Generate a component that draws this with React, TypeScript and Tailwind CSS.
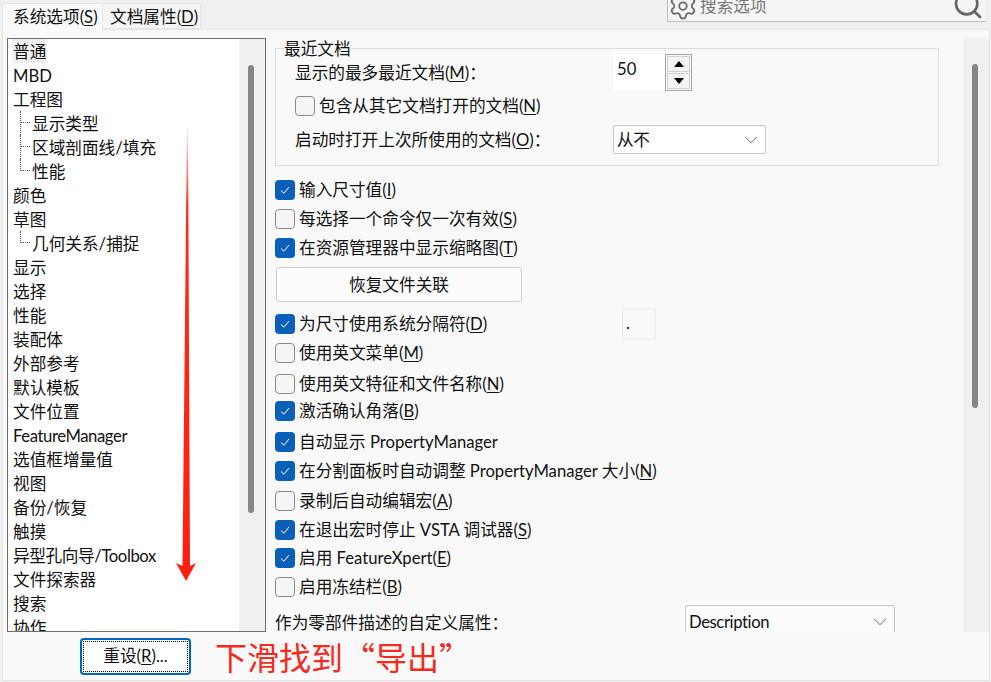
import { ChevronDown, Search, Settings } from 'lucide-react'

const sans = { fontFamily: '"Lato", "Noto Sans CJK SC", sans-serif' }
const cjkOnly = { fontFamily: '"Noto Sans CJK SC", sans-serif' }

const treeItems: [string, number][] = [
  ['普通', 0], ['MBD', 0], ['工程图', 0], ['显示类型', 1], ['区域剖面线/填充', 1], ['性能', 2],
  ['颜色', 0], ['草图', 0], ['几何关系/捕捉', 2], ['显示', 0], ['选择', 0], ['性能', 0],
  ['装配体', 0], ['外部参考', 0], ['默认模板', 0], ['文件位置', 0], ['FeatureManager', 0],
  ['选值框增量值', 0], ['视图', 0], ['备份/恢复', 0], ['触摸', 0], ['异型孔向导/Toolbox', 0],
  ['文件探索器', 0], ['搜索', 0], ['协作', 0],
]

// Mnemonic label: 输入尺寸值(I) with the letter underlined
const Label = ({ text, k, rest }: { text: string; k?: string; rest?: string }) => (
  <span className="whitespace-nowrap">
    {text}
    {k && (
      <span>
        (<span className="underline underline-offset-2">{k}</span>){rest}
      </span>
    )}
  </span>
)

const Check = ({ on }: { on?: boolean }) =>
  on ? (
    <span className="flex h-[20px] w-[20px] shrink-0 items-center justify-center rounded-[4px] bg-[#0a5fb9]">
      <svg width="12" height="12" viewBox="0 0 12 12" fill="none" stroke="white" strokeWidth="1">
        <path d="M2 6.5 L5 9.2 L10 3" />
      </svg>
    </span>
  ) : (
    <span className="h-[20px] w-[20px] shrink-0 rounded-[4px] border border-[#8a8a8a] bg-[#f5f5f5]" />
  )

const CheckRow = ({
  on,
  text,
  k,
  className,
}: {
  on?: boolean
  text: string
  k?: string
  className: string
}) => (
  <div className={`flex h-[20px] items-center gap-[4px] ${className}`}>
    <Check on={on} />
    <Label text={text} k={k} />
  </div>
)

const Select = ({ value, className }: { value: string; className: string }) => (
  <div
    className={`flex shrink-0 items-center justify-between rounded-[2px] border border-[#c4c8cc] pl-[3px] pr-[3px] tracking-[-0.4px] ${className}`}
  >
    <span>{value}</span>
    <ChevronDown size={22} strokeWidth={1} className="text-[#555555]" />
  </div>
)

const Tree = () => (
  <div className="flex h-[594px] w-[259px] shrink-0 overflow-hidden border border-[#6e6e6e]">
    <div className="w-[231px] shrink-0 bg-white pl-[4px]">
      {treeItems.map(([name, level], i) => (
        <div key={i} className="flex h-[24px] items-center whitespace-nowrap">
          {level > 0 && (
            <div
              className={`ml-[8px] w-[11px] shrink-0 border-l border-dotted border-[#555555] ${
                level === 2 ? 'h-[12px] self-start' : 'h-[24px]'
              }`}
            >
              <div className="h-[12px] w-[9px] border-b border-dotted border-[#555555]" />
            </div>
          )}
          <span
            className={`px-[1px] pt-[2px] leading-[22px] ${i === 0 ? 'bg-[#f0f0f0]' : ''} ${
              /[A-Za-z]{4}/.test(name) ? 'tracking-[-0.4px]' : ''
            }`}
          >
            {name}
          </span>
        </div>
      ))}
    </div>
    <div className="flex-1 bg-[#f0f0f0] pl-[9px] pt-[26px]">
      <div className="h-[448px] w-[6px] rounded-[3px] bg-[#868686]" />
    </div>
  </div>
)

const Spinner = () => (
  <div className="flex h-[37px] w-[79px]">
    <div className="w-[52px] bg-white pl-[4px] pt-[2px] leading-[26px]">50</div>
    <div className="flex w-[27px] flex-col gap-[1px] border border-[#a6a6a6] p-[1px]">
      <div className="flex flex-1 items-center justify-center border border-[#d0d0d0] bg-[#f5f5f5]">
        <div className="h-0 w-0 border-x-[5px] border-b-[6px] border-x-transparent border-b-black" />
      </div>
      <div className="flex flex-1 items-center justify-center border border-[#d0d0d0] bg-[#f5f5f5]">
        <div className="h-0 w-0 border-x-[5px] border-t-[6px] border-x-transparent border-t-black" />
      </div>
    </div>
  </div>
)

const RecentDocs = () => (
  <div className="relative ml-[9px] mt-[10px] h-[118px] w-[664px] border border-[#dcdcdc] pl-[19px] pt-[5px]">
    <span className="absolute left-[8px] top-[-9px] bg-[#f9f9f9] leading-[18px]">最近文档</span>
    <div className="flex h-[37px] items-start">
      <div className="w-[318px] leading-[38px]">
        <Label text="显示的最多最近文档" k="M" />：
      </div>
      <Spinner />
    </div>
    <div className="mt-[5px] flex h-[20px] items-center gap-[4px]">
      <Check />
      <Label text="包含从其它文档打开的文档" k="N" />
    </div>
    <div className="mt-[9px] flex items-center">
      <div className="w-[318px]">
        <Label text="启动时打开上次所使用的文档" k="O" />：
      </div>
      <Select value="从不" className="h-[29px] w-[153px] bg-white" />
    </div>
  </div>
)

const Options = () => (
  <div className="h-[594px] flex-1 overflow-hidden">
    <RecentDocs />
    <div className="pl-[9px]">
      <CheckRow on text="输入尺寸值" k="I" className="mt-[14px]" />
      <CheckRow text="每选择一个命令仅一次有效" k="S" className="mt-[9px]" />
      <CheckRow on text="在资源管理器中显示缩略图" k="T" className="mt-[9px]" />
      <div className="ml-[1px] mt-[9px] flex h-[35px] w-[246px] items-center justify-center rounded-[3px] border border-[#cccccc] bg-[#fcfcfc]">
        恢复文件关联
      </div>
      <div className="mt-[6px] flex h-[32px] items-center">
        <div className="w-[347px]">
          <CheckRow on text="为尺寸使用系统分隔符" k="D" className="" />
        </div>
        <div className="h-[32px] w-[34px] rounded-[2px] border border-[#ececec] pl-[3px] leading-[28px]">.</div>
      </div>
      <CheckRow text="使用英文菜单" k="M" className="mt-[3px]" />
      <CheckRow text="使用英文特征和文件名称" k="N" className="mt-[11px]" />
      <CheckRow on text="激活确认角落" k="B" className="mt-[7px]" />
      <CheckRow on text="自动显示 PropertyManager" className="mt-[11px]" />
      <CheckRow on text="在分割面板时自动调整 PropertyManager 大小" k="N" className="mt-[9px]" />
      <CheckRow text="录制后自动编辑宏" k="A" className="mt-[10px]" />
      <CheckRow on text="在退出宏时停止 VSTA 调试器" k="S" className="mt-[9px]" />
      <CheckRow on text="启用 FeatureXpert" k="E" className="mt-[8px]" />
      <CheckRow text="启用冻结栏" k="B" className="mt-[9px]" />
      <div className="mt-[8px] flex items-start">
        <div className="w-[410px] pt-[6px]">作为零部件描述的自定义属性：</div>
        <Select value="Description" className="h-[34px] w-[210px] bg-[#fbfcfe]" />
      </div>
    </div>
  </div>
)

export default function App() {
  return (
    <div
      className="relative flex h-[682px] w-[991px] flex-col overflow-hidden bg-[#f0f0f0] text-[16.67px] leading-[24px] text-[#111111]"
      style={sans}
    >
      {/* Tabs + search */}
      <div className="flex h-[29px] shrink-0">
        <div className="relative z-10 ml-[2px] mt-[3px] h-[27px] w-[101px] border border-b-0 border-[#e5e5e5] bg-[#f9f9f9] pl-[10px] leading-[26px]">
          <Label text="系统选项" k="S" />
        </div>
        <div className="mt-[3px] h-[26px] w-[98px] border border-l-0 border-[#e5e5e5] bg-[#f5f5f5] pl-[7px] leading-[26px]">
          <Label text="文档属性" k="D" />
        </div>
        <div className="ml-[466px] flex h-[22px] w-[319px] items-center overflow-hidden border-b border-l border-[#c0c0c0] bg-[#f5f5f5] text-[#777777]">
          <Settings size={30} strokeWidth={1.4} className="-mt-[9px] shrink-0 text-[#666666]" />
          <span className="-mt-[9px] ml-[2px] whitespace-nowrap">搜索选项</span>
          <Search size={32} strokeWidth={2} className="-mt-[12px] ml-auto mr-[2px] shrink-0 text-[#666666]" />
        </div>
      </div>

      {/* Main panel */}
      <div className="ml-[2px] mr-[1px] flex h-[652px] flex-col border border-[#e5e5e5] bg-[#f9f9f9]">
        <div className="flex pl-[4px] pt-[8px]">
          <Tree />
          <Options />
          <div className="h-[594px] w-[26px] shrink-0 bg-[#f0f0f0] pl-[9px] pt-[26px]">
            <div className="h-[344px] w-[6px] rounded-[3px] bg-[#868686]" />
          </div>
        </div>
        <div className="flex items-center pl-[77px] pt-[4px]">
          <div className="h-[37px] w-[111px] rounded-[4px] border-2 border-[#0067c0] bg-white p-[1px]">
            <div className="flex h-full items-center justify-center border border-dotted border-black">
              <Label text="重设" k="R" rest="..." />
            </div>
          </div>
          <span className="ml-[24px] whitespace-nowrap text-[32px] leading-[40px] text-[#f5291c]" style={cjkOnly}>
            下滑找到“导出”
          </span>
        </div>
      </div>

      {/* Red arrow annotation, tapers and fades towards the top */}
      <svg className="absolute left-[170px] top-[120px]" width="34" height="465" viewBox="0 0 34 465">
        <defs>
          <linearGradient id="fade" x1="0" y1="0" x2="0" y2="1">
            <stop offset="0" stopColor="#ff2a1a" stopOpacity="0" />
            <stop offset="0.18" stopColor="#ff2a1a" />
            <stop offset="1" stopColor="#ff1f10" />
          </linearGradient>
        </defs>
        <path d="M17 3 L18 3 L20 446 L26 443 L16 461 L6 443 L12.5 446 Z" fill="url(#fade)" />
      </svg>
    </div>
  )
}
